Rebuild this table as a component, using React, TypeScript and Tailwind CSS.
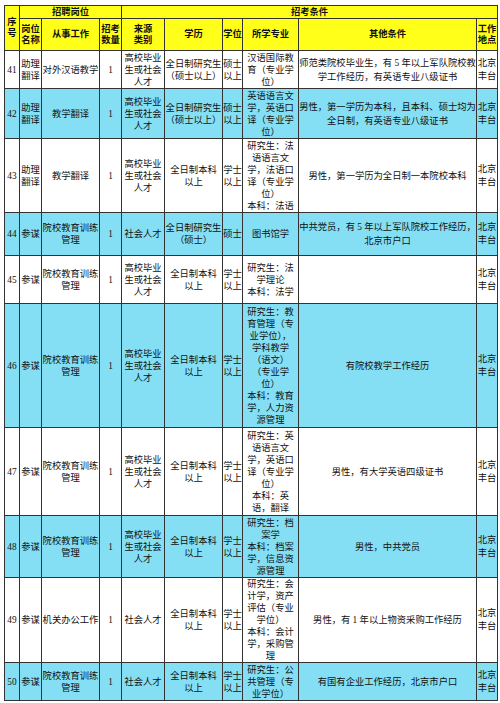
type Row = {
  no: string;
  name: string[];
  work: string[];
  src: string[];
  edu: string[];
  deg: string[];
  major: string[];
  other: string[];
  h: number;
  blue: boolean;
};

const rows: Row[] = [
  {
    no: "41",
    name: ["助理", "翻译"],
    work: ["对外汉语教学"],
    src: ["高校毕业", "生或社会", "人才"],
    edu: ["全日制研究生", "（硕士以上）"],
    deg: ["硕士", "以上"],
    major: ["汉语国际教", "育（专业学", "位）"],
    other: ["师范类院校毕业生，有 5 年以上军队院校教", "学工作经历，有英语专业八级证书"],
    h: 38,
    blue: false,
  },
  {
    no: "42",
    name: ["助理", "翻译"],
    work: ["教学翻译"],
    src: ["高校毕业", "生或社会", "人才"],
    edu: ["全日制研究生", "（硕士以上）"],
    deg: ["硕士", "以上"],
    major: ["英语语言文", "学，英语口", "译（专业学", "位）"],
    other: ["男性，第一学历为本科，且本科、硕士均为", "全日制，有英语专业八级证书"],
    h: 50,
    blue: true,
  },
  {
    no: "43",
    name: ["助理", "翻译"],
    work: ["教学翻译"],
    src: ["高校毕业", "生或社会", "人才"],
    edu: ["全日制本科", "以上"],
    deg: ["学士", "以上"],
    major: ["研究生：法", "语语言文", "学，法语口", "译（专业学", "位）", "本科：法语"],
    other: ["男性，第一学历为全日制一本院校本科"],
    h: 74,
    blue: false,
  },
  {
    no: "44",
    name: ["参谋"],
    work: ["院校教育训练", "管理"],
    src: ["社会人才"],
    edu: ["全日制研究生", "（硕士）"],
    deg: ["硕士"],
    major: ["图书馆学"],
    other: ["中共党员，有 5 年以上军队院校工作经历，", "北京市户口"],
    h: 43,
    blue: true,
  },
  {
    no: "45",
    name: ["参谋"],
    work: ["院校教育训练", "管理"],
    src: ["高校毕业", "生或社会", "人才"],
    edu: ["全日制本科", "以上"],
    deg: ["学士", "以上"],
    major: ["研究生：法", "学理论", "本科：法学"],
    other: [],
    h: 48,
    blue: false,
  },
  {
    no: "46",
    name: ["参谋"],
    work: ["院校教育训练", "管理"],
    src: ["高校毕业", "生或社会", "人才"],
    edu: ["全日制本科", "以上"],
    deg: ["学士", "以上"],
    major: [
      "研究生：教",
      "育管理（专",
      "业学位），",
      "学科教学",
      "（语文）",
      "（专业学",
      "位）",
      "本科：教育",
      "学，人力资",
      "源管理",
    ],
    other: ["有院校教学工作经历"],
    h: 124,
    blue: true,
  },
  {
    no: "47",
    name: ["参谋"],
    work: ["院校教育训练", "管理"],
    src: ["高校毕业", "生或社会", "人才"],
    edu: ["全日制本科", "以上"],
    deg: ["学士", "以上"],
    major: ["研究生：英", "语语言文", "学，英语口", "译（专业学", "位）", "本科：英", "语，翻译"],
    other: ["男性，有大学英语四级证书"],
    h: 88,
    blue: false,
  },
  {
    no: "48",
    name: ["参谋"],
    work: ["院校教育训练", "管理"],
    src: ["高校毕业", "生或社会", "人才"],
    edu: ["全日制本科", "以上"],
    deg: ["学士", "以上"],
    major: ["研究生：档", "案学", "本科：档案", "学，信息资", "源管理"],
    other: ["男性，中共党员"],
    h: 62,
    blue: true,
  },
  {
    no: "49",
    name: ["参谋"],
    work: ["机关办公工作"],
    src: ["社会人才"],
    edu: ["全日制本科", "以上"],
    deg: ["学士", "以上"],
    major: ["研究生：会", "计学，资产", "评估（专业", "学位）", "本科：会计", "学，采购管", "理"],
    other: ["男性，有 1 年以上物资采购工作经历"],
    h: 85,
    blue: false,
  },
  {
    no: "50",
    name: ["参谋"],
    work: ["院校教育训练", "管理"],
    src: ["社会人才"],
    edu: ["全日制本科", "以上"],
    deg: ["学士", "以上"],
    major: ["研究生：公", "共管理（专", "业学位）"],
    other: ["有国有企业工作经历，北京市户口"],
    h: 38,
    blue: true,
  },
];

function Lines({ items }: { items: string[] }) {
  return (
    <>
      {items.map((t, i) => (
        <div key={i} className="whitespace-nowrap">
          {t}
        </div>
      ))}
    </>
  );
}

const td = "border border-[#333] px-0 py-0 text-center align-middle leading-[12px]";
const th = "border border-[#333] px-0 py-0 text-center align-middle font-bold leading-[11px]";

export default function App() {
  return (
    <div
      className="min-h-screen bg-white pl-[4px] pt-[5px] text-[9.3px] text-[#111]"
      style={{ fontFamily: '"Liberation Serif", "Noto Sans CJK SC", serif' }}
    >
      <table className="table-fixed border-collapse w-[493px]">
        <colgroup>
          <col className="w-[15px]" />
          <col className="w-[22px]" />
          <col className="w-[58px]" />
          <col className="w-[22px]" />
          <col className="w-[43px]" />
          <col className="w-[58px]" />
          <col className="w-[20px]" />
          <col className="w-[56px]" />
          <col className="w-[178px]" />
          <col className="w-[21px]" />
        </colgroup>
        <thead className="bg-[#ffff1a]">
          <tr className="h-[13px]">
            <th rowSpan={2} className={th}>
              <Lines items={["序", "号"]} />
            </th>
            <th colSpan={3} className={th}>招聘岗位</th>
            <th colSpan={6} className={th}>招考条件</th>
          </tr>
          <tr className="h-[32px]">
            <th className={th}>
              <Lines items={["岗位", "名称"]} />
            </th>
            <th className={th}>从事工作</th>
            <th className={th}>
              <Lines items={["招考", "数量"]} />
            </th>
            <th className={th}>
              <Lines items={["来源", "类别"]} />
            </th>
            <th className={th}>学历</th>
            <th className={th}>学位</th>
            <th className={th}>所学专业</th>
            <th className={th}>其他条件</th>
            <th className={th}>
              <Lines items={["工作", "地点"]} />
            </th>
          </tr>
        </thead>
        <tbody>
          {rows.map((r) => (
            <tr
              key={r.no}
              className={r.blue ? "bg-[#84dff5]" : "bg-white"}
              style={{ height: r.h }}
            >
              <td className={td}>{r.no}</td>
              <td className={td}>
                <Lines items={r.name} />
              </td>
              <td className={td}>
                <Lines items={r.work} />
              </td>
              <td className={td}>1</td>
              <td className={td}>
                <Lines items={r.src} />
              </td>
              <td className={td}>
                <Lines items={r.edu} />
              </td>
              <td className={td}>
                <Lines items={r.deg} />
              </td>
              <td className={td}>
                <Lines items={r.major} />
              </td>
              <td className={`${td} leading-[14px]`}>
                <Lines items={r.other} />
              </td>
              <td className={`${td} leading-[13px]`}>
                <Lines items={["北京", "丰台"]} />
              </td>
            </tr>
          ))}
        </tbody>
      </table>
    </div>
  );
}
